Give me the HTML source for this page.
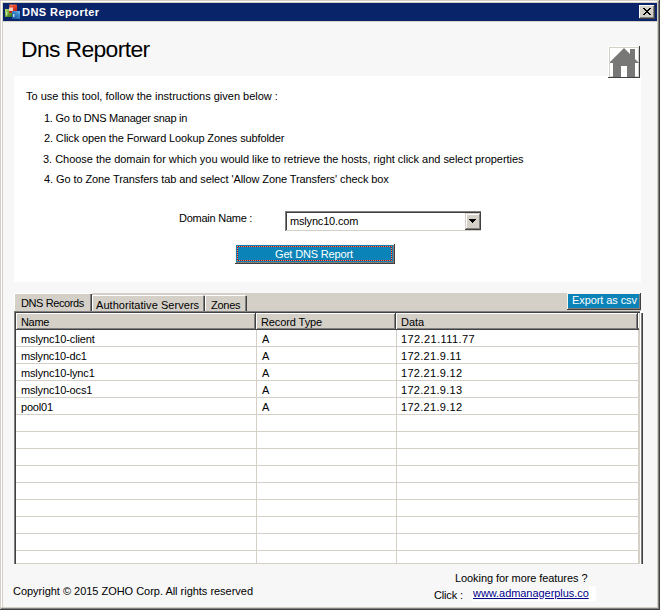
<!DOCTYPE html>
<html><head><meta charset="utf-8">
<style>
html,body{margin:0;padding:0;}
body{width:660px;height:610px;position:relative;overflow:hidden;background:#d4d0c8;font-family:"Liberation Sans",sans-serif;}
.a{position:absolute;}
.hc{position:absolute;top:313px;height:17px;background:#d4d0c8;box-shadow:inset -1px -1px #404040,inset 1px 1px #fff,inset -2px -2px #808080;}
.t{position:absolute;font-size:11px;line-height:13px;white-space:nowrap;color:#000;}
</style></head><body>
<!-- window frame -->
<div class="a" style="left:1px;top:1px;width:656px;height:606px;background:#fff"></div>
<div class="a" style="left:0;top:609px;width:660px;height:1px;background:#404040"></div>
<div class="a" style="left:659px;top:0;width:1px;height:610px;background:#404040"></div>
<div class="a" style="left:1px;top:608px;width:658px;height:1px;background:#808080"></div>
<div class="a" style="left:658px;top:1px;width:1px;height:608px;background:#808080"></div>
<div class="a" style="left:2px;top:2px;width:656px;height:606px;background:#d4d0c8"></div>
<!-- title bar -->
<div class="a" style="left:3px;top:3px;width:654px;height:18px;background:#0a246a"></div>
<svg class="a" style="left:5px;top:4px" width="16" height="16" viewBox="0 0 16 16">
  <defs>
    <linearGradient id="gr" x1="0" y1="0" x2="0.3" y2="1"><stop offset="0" stop-color="#f8a070"/><stop offset="0.3" stop-color="#e85030"/><stop offset="1" stop-color="#c02010"/></linearGradient>
    <linearGradient id="gg" x1="0" y1="0" x2="0.8" y2="1"><stop offset="0" stop-color="#c0e080"/><stop offset="0.4" stop-color="#80b840"/><stop offset="1" stop-color="#3a7818"/></linearGradient>
    <linearGradient id="gb" x1="1" y1="0" x2="0.2" y2="1"><stop offset="0" stop-color="#80c0f0"/><stop offset="0.4" stop-color="#3a88c8"/><stop offset="1" stop-color="#1858a0"/></linearGradient>
  </defs>
  <rect x="0" y="5" width="7" height="8" fill="url(#gg)"/>
  <path d="M4.5 0.5h7l0.5 1v6.5l-1 1h-6.5l-0.5-1z" fill="url(#gr)"/>
  <rect x="7" y="7" width="8" height="8" fill="url(#gb)"/>
  <rect x="4" y="3.5" width="4" height="3.5" fill="#fff" opacity=".75"/>
  <rect x="1" y="8" width="1.3" height="3.5" fill="#f0ffe0" opacity=".7"/>
  <rect x="8" y="10" width="1.5" height="3" fill="#f0f8ff" opacity=".75"/>
</svg>
<!-- close button -->
<div class="a" style="left:639px;top:5px;width:16px;height:14px;background:#404040"></div>
<div class="a" style="left:639px;top:5px;width:15px;height:13px;background:#fff"></div>
<div class="a" style="left:640px;top:6px;width:14px;height:12px;background:#808080"></div>
<div class="a" style="left:640px;top:6px;width:13px;height:11px;background:#d4d0c8"></div>
<svg class="a" style="left:643px;top:8px" width="8" height="7" shape-rendering="crispEdges">
  <path fill="#000" d="M0 0h2v1h-2zM6 0h2v1h-2zM1 1h2v1h-2zM5 1h2v1h-2zM2 2h4v1h-4zM3 3h2v1h-2zM2 4h4v1h-4zM1 5h2v1h-2zM5 5h2v1h-2zM0 6h2v1h-2zM6 6h2v1h-2z"/>
</svg>
<!-- client -->
<div class="a" style="left:3px;top:22px;width:654px;height:585px;background:#f7f7f7"></div>
<!-- instruction panel -->
<div class="a" style="left:14px;top:76px;width:627px;height:206px;background:#fff"></div>
<!-- home button -->
<div class="a" style="left:608px;top:46px;width:32px;height:32px;background:#404040"></div>
<div class="a" style="left:608px;top:46px;width:31px;height:31px;background:#fff"></div>
<div class="a" style="left:609px;top:47px;width:30px;height:30px;background:#d4d0c8"></div>
<div class="a" style="left:610px;top:48px;width:28px;height:28px;background:#fff"></div>
<svg class="a" style="left:608px;top:46px" width="32" height="32" viewBox="0 0 32 32">
  <clipPath id="hc"><rect x="2" y="2" width="29" height="29"/></clipPath>
  <g clip-path="url(#hc)" fill="#787876">
  <path d="M16 2 L31 17 L1 17 Z"/>
  <rect x="5" y="17" width="22" height="14"/>
  <rect x="22" y="3" width="5" height="10"/>
  </g>
  <rect x="13" y="20" width="6" height="11" fill="#fff"/>
</svg>
<!-- combo -->
<div class="a" style="left:285px;top:211px;width:197px;height:21px;background:#fff"></div>
<div class="a" style="left:285px;top:211px;width:196px;height:20px;background:#d4d0c8"></div>
<div class="a" style="left:285px;top:211px;width:196px;height:1px;background:#808080"></div>
<div class="a" style="left:285px;top:211px;width:1px;height:20px;background:#808080"></div>
<div class="a" style="left:286px;top:212px;width:195px;height:1px;background:#404040"></div>
<div class="a" style="left:286px;top:212px;width:1px;height:18px;background:#404040"></div>
<div class="a" style="left:287px;top:213px;width:194px;height:17px;background:#fff"></div>
<div class="a" style="left:465px;top:213px;width:16px;height:17px;background:#404040"></div>
<div class="a" style="left:465px;top:213px;width:15px;height:16px;background:#d4d0c8"></div>
<div class="a" style="left:466px;top:214px;width:14px;height:15px;background:#808080"></div>
<div class="a" style="left:466px;top:214px;width:13px;height:14px;background:#fff"></div>
<div class="a" style="left:467px;top:215px;width:12px;height:13px;background:#d4d0c8"></div>
<svg class="a" style="left:469px;top:219px" width="7" height="4" shape-rendering="crispEdges"><path fill="#000" d="M0 0h7v1h-7zM1 1h5v1h-5zM2 2h3v1h-3zM3 3h1v1h-1z"/></svg>
<!-- Get DNS Report button -->
<div class="a" style="left:235px;top:244px;width:160px;height:20px;background:#404040"></div>
<div class="a" style="left:235px;top:244px;width:159px;height:19px;background:#fbf3ee"></div>
<div class="a" style="left:236px;top:245px;width:158px;height:18px;background:#887c78"></div>
<div class="a" style="left:236px;top:245px;width:157px;height:17px;background:#0a84b8"></div>
<div class="a" style="left:237px;top:246px;width:155px;height:1px;background:repeating-linear-gradient(90deg,#f49050 0 1px,#801040 1px 2px)"></div>
<div class="a" style="left:237px;top:260px;width:155px;height:1px;background:repeating-linear-gradient(90deg,#f49050 0 1px,#801040 1px 2px)"></div>
<div class="a" style="left:237px;top:246px;width:1px;height:15px;background:repeating-linear-gradient(180deg,#f49050 0 1px,#801040 1px 2px)"></div>
<div class="a" style="left:391px;top:246px;width:1px;height:15px;background:repeating-linear-gradient(180deg,#f49050 0 1px,#801040 1px 2px)"></div>
<!-- tab strip -->
<div class="a" style="left:15px;top:293px;width:626px;height:18px;background:#d4d0c8"></div>
<!-- tab1 selected -->
<div class="a" style="left:14px;top:293px;width:78px;height:1px;background:#fff"></div>
<div class="a" style="left:14px;top:293px;width:1px;height:18px;background:#fff"></div>
<div class="a" style="left:90px;top:294px;width:1px;height:17px;background:#808080"></div>
<div class="a" style="left:91px;top:294px;width:1px;height:17px;background:#404040"></div>
<!-- tab2 -->
<div class="a" style="left:92px;top:295px;width:111px;height:1px;background:#fff"></div>
<div class="a" style="left:92px;top:295px;width:1px;height:16px;background:#fff"></div>
<div class="a" style="left:203px;top:296px;width:1px;height:15px;background:#808080"></div>
<div class="a" style="left:204px;top:296px;width:1px;height:15px;background:#404040"></div>
<!-- tab3 -->
<div class="a" style="left:205px;top:295px;width:40px;height:1px;background:#fff"></div>
<div class="a" style="left:205px;top:295px;width:1px;height:16px;background:#fff"></div>
<div class="a" style="left:245px;top:296px;width:1px;height:15px;background:#808080"></div>
<div class="a" style="left:246px;top:296px;width:1px;height:15px;background:#404040"></div>
<!-- export button -->
<div class="a" style="left:567px;top:293px;width:74px;height:17px;background:#404040"></div>
<div class="a" style="left:567px;top:293px;width:73px;height:16px;background:#fbf3ee"></div>
<div class="a" style="left:568px;top:294px;width:72px;height:15px;background:#887c78"></div>
<div class="a" style="left:568px;top:294px;width:71px;height:14px;background:#0a84b8"></div>
<!-- grid -->
<div class="a" style="left:14px;top:311px;width:629px;height:253px;background:#fff"></div>
<div class="a" style="left:14px;top:311px;width:626px;height:1px;background:#808080"></div>
<div class="a" style="left:14px;top:311px;width:1px;height:253px;background:#808080"></div>
<div class="a" style="left:15px;top:312px;width:625px;height:1px;background:#404040"></div>
<div class="a" style="left:15px;top:312px;width:1px;height:252px;background:#404040"></div>
<!-- header -->
<div class="hc" style="left:16px;width:240px"></div>
<div class="hc" style="left:256px;width:140px"></div>
<div class="hc" style="left:396px;width:242px"></div>
<div class="a" style="left:638px;top:313px;width:1px;height:15px;background:#fff"></div>
<div class="a" style="left:638px;top:328px;width:1px;height:1px;background:#808080"></div>
<div class="a" style="left:638px;top:329px;width:1px;height:1px;background:#404040"></div>
<!-- body grid lines -->
<div class="a" style="left:256px;top:330px;width:1px;height:233px;background:#d4d0c8"></div>
<div class="a" style="left:396px;top:330px;width:1px;height:233px;background:#d4d0c8"></div>
<div class="a" style="left:16px;top:346px;width:622px;height:1px;background:#d4d0c8"></div>
<div class="a" style="left:16px;top:363px;width:622px;height:1px;background:#d4d0c8"></div>
<div class="a" style="left:16px;top:380px;width:622px;height:1px;background:#d4d0c8"></div>
<div class="a" style="left:16px;top:397px;width:622px;height:1px;background:#d4d0c8"></div>
<div class="a" style="left:16px;top:414px;width:622px;height:1px;background:#d4d0c8"></div>
<div class="a" style="left:16px;top:431px;width:622px;height:1px;background:#d4d0c8"></div>
<div class="a" style="left:16px;top:448px;width:622px;height:1px;background:#d4d0c8"></div>
<div class="a" style="left:16px;top:465px;width:622px;height:1px;background:#d4d0c8"></div>
<div class="a" style="left:16px;top:482px;width:622px;height:1px;background:#d4d0c8"></div>
<div class="a" style="left:16px;top:499px;width:622px;height:1px;background:#d4d0c8"></div>
<div class="a" style="left:16px;top:516px;width:622px;height:1px;background:#d4d0c8"></div>
<div class="a" style="left:16px;top:533px;width:622px;height:1px;background:#d4d0c8"></div>
<div class="a" style="left:16px;top:550px;width:622px;height:1px;background:#d4d0c8"></div>
<div class="a" style="left:16px;top:563px;width:624px;height:1px;background:#d4d0c8"></div>
<div class="a" style="left:638px;top:330px;width:1px;height:234px;background:#d4d0c8"></div>
<div class="a" style="left:639px;top:313px;width:1px;height:251px;background:#d4d0c8"></div>
<div class="a" style="left:640px;top:313px;width:1px;height:251px;background:#fff"></div>
<div class="a" style="left:641px;top:313px;width:1px;height:251px;background:#808080"></div>
<div class="a" style="left:642px;top:313px;width:1px;height:251px;background:#404040"></div>
<!-- footer -->
<div class="a" style="left:472px;top:590px;width:124px;height:11px;background:#fff"></div>
<div class="a" style="left:589px;top:586px;width:7px;height:15px;background:#fff"></div>
<div class="t" style="left:22px;top:6px;letter-spacing:0.455px;color:#fff;font-weight:bold">DNS Reporter</div>
<div class="t" style="left:21px;top:37px;font-size:22.9px;line-height:24px;letter-spacing:-0.636px;">Dns Reporter</div>
<div class="t" style="left:26px;top:90px;">To use this tool, follow the instructions given below :</div>
<div class="t" style="left:44px;top:112px;letter-spacing:-0.259px;">1. Go to DNS Manager snap in</div>
<div class="t" style="left:44px;top:132px;letter-spacing:-0.128px;">2. Click open the Forward Lookup Zones subfolder</div>
<div class="t" style="left:43px;top:153px;letter-spacing:-0.03px;">3. Choose the domain for which you would like to retrieve the hosts, right click and select properties</div>
<div class="t" style="left:44px;top:173px;letter-spacing:-0.086px;">4. Go to Zone Transfers tab and select 'Allow Zone Transfers' check box</div>
<div class="t" style="left:179px;top:212px;letter-spacing:-0.25px;">Domain Name :</div>
<div class="t" style="left:290px;top:215px;letter-spacing:-0.182px;">mslync10.com</div>
<div class="t" style="left:275px;top:248px;letter-spacing:-0.154px;color:#fff">Get DNS Report</div>
<div class="t" style="left:21px;top:297px;letter-spacing:-0.4px;">DNS Records</div>
<div class="t" style="left:96px;top:299px;letter-spacing:0.05px;">Authoritative Servers</div>
<div class="t" style="left:211px;top:299px;letter-spacing:-0.25px;">Zones</div>
<div class="t" style="left:572px;top:294px;letter-spacing:-0.083px;color:#fff">Export as csv</div>
<div class="t" style="left:21px;top:316px;letter-spacing:-0.333px;">Name</div>
<div class="t" style="left:261px;top:316px;letter-spacing:-0.1px;">Record Type</div>
<div class="t" style="left:401px;top:316px;">Data</div>
<div class="t" style="left:21px;top:333px;letter-spacing:-0.143px;">mslync10-client</div>
<div class="t" style="left:262px;top:333px;">A</div>
<div class="t" style="left:401px;top:333px;letter-spacing:0.417px;">172.21.111.77</div>
<div class="t" style="left:21px;top:350px;letter-spacing:-0.182px;">mslync10-dc1</div>
<div class="t" style="left:262px;top:350px;">A</div>
<div class="t" style="left:401px;top:350px;letter-spacing:0.3px;">172.21.9.11</div>
<div class="t" style="left:21px;top:367px;letter-spacing:-0.154px;">mslync10-lync1</div>
<div class="t" style="left:262px;top:367px;">A</div>
<div class="t" style="left:401px;top:367px;letter-spacing:0.3px;">172.21.9.12</div>
<div class="t" style="left:21px;top:384px;letter-spacing:-0.167px;">mslync10-ocs1</div>
<div class="t" style="left:262px;top:384px;">A</div>
<div class="t" style="left:401px;top:384px;letter-spacing:0.3px;">172.21.9.13</div>
<div class="t" style="left:21px;top:401px;letter-spacing:-0.2px;">pool01</div>
<div class="t" style="left:262px;top:401px;">A</div>
<div class="t" style="left:401px;top:401px;letter-spacing:0.3px;">172.21.9.12</div>
<div class="t" style="left:13px;top:585px;letter-spacing:-0.022px;">Copyright © 2015 ZOHO Corp. All rights reserved</div>
<div class="t" style="left:455px;top:572px;letter-spacing:-0.077px;">Looking for more features ?</div>
<div class="t" style="left:434px;top:589px;letter-spacing:-0.167px;">Click :</div>
<div class="t" style="left:473px;top:587px;letter-spacing:-0.053px;color:#00008b;text-decoration:underline">www.admanagerplus.co</div>
</body></html>
